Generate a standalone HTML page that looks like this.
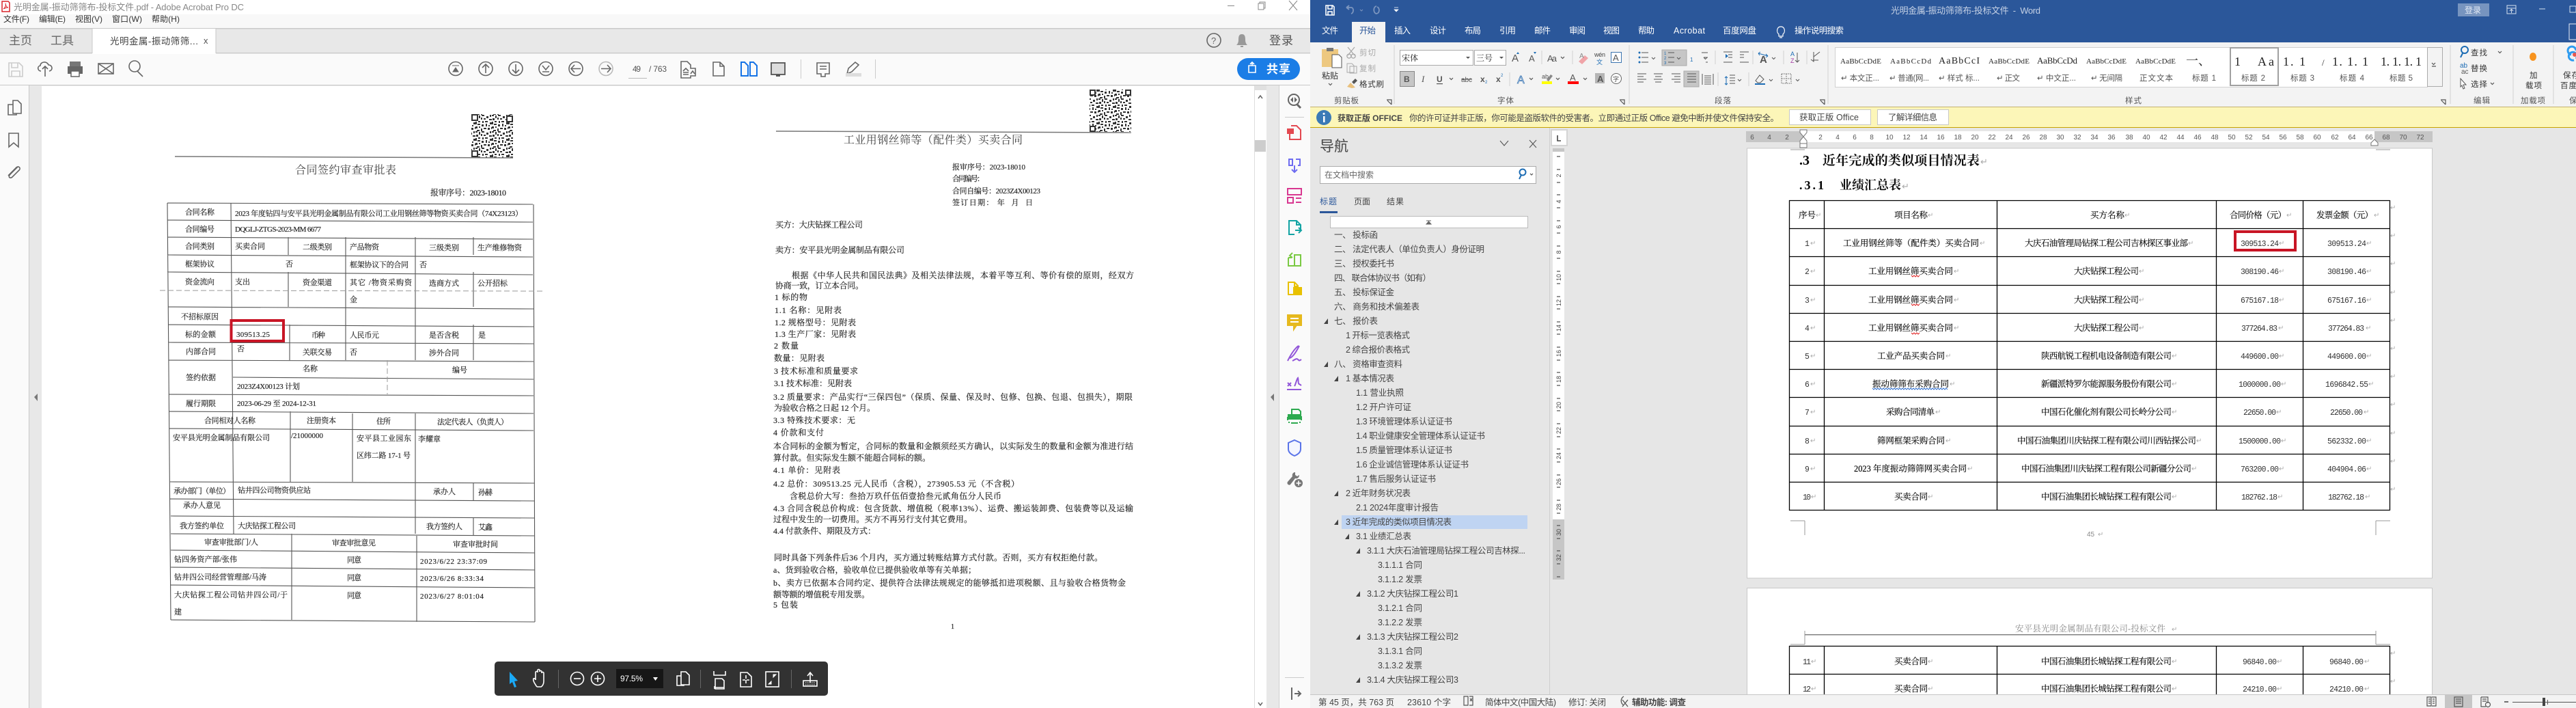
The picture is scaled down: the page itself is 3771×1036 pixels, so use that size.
<!DOCTYPE html>
<html lang="zh-CN"><head><meta charset="utf-8"><title>光明金属-振动筛筛布-投标文件</title>
<style>
html,body{margin:0;padding:0;width:3771px;height:1036px;overflow:hidden;background:#fff}
svg{display:block}
text{font-family:"Liberation Sans","Noto Sans CJK SC",sans-serif;font-size:12px;fill:#444;white-space:pre}
.ser{font-family:"Liberation Serif","Noto Serif CJK SC",serif}
.t11 text,.t11{font-family:"Liberation Serif","Noto Serif CJK SC",serif;font-size:11px;fill:#222;stroke:#333;stroke-width:.2}
.c12 text{font-family:"Liberation Serif","Noto Serif CJK SC",serif;font-size:12px;fill:#222;stroke:#333;stroke-width:.2}
.c16 text{font-family:"Liberation Serif","Noto Serif CJK SC",serif;font-size:16px;fill:#444}
.m text{font-size:12px;fill:#333}
.tab text{font-size:12.5px;fill:#fff}
.nav text{font-size:12.5px;fill:#444}
.lab text{font-size:11.5px;fill:#555}
.sty text{font-family:"Liberation Serif","Noto Serif CJK SC",serif;font-size:11px;fill:#222}
.rh text{font-size:10px;fill:#555;text-anchor:middle}
.rv text{font-size:9px;fill:#444;text-anchor:middle}
.dc text{font-family:"Liberation Serif","Noto Serif CJK SC",serif;font-size:12.5px;fill:#000;stroke:#111;stroke-width:.15}
.num text{font-family:"Liberation Mono","Noto Serif CJK SC",monospace;font-size:11.5px;fill:#333}
.r{font-size:10px;fill:#aaa;font-family:"DejaVu Sans",sans-serif}
.i{fill:none;stroke:#666;stroke-width:1.6}
.k{fill:none;stroke:#555;stroke-width:1.2}
.w{fill:none;stroke:#fff;stroke-width:1.6}
</style></head><body>
<svg width="3771" height="1036" viewBox="0 0 3771 1036" xmlns="http://www.w3.org/2000/svg">
<defs>
<pattern id="q" width="24" height="24" patternUnits="userSpaceOnUse"><path fill="#333" d="M0 0h3v2H0zM5 1h2v4H5zM9 0h4v2H9zM16 2h3v3h-3zM21 0h2v3h-2zM1 5h3v3H1zM8 4h2v3H8zM12 5h3v2h-3zM20 6h4v2h-4zM0 10h2v4H0zM4 9h3v2H4zM10 9h2v3h-2zM14 9h4v2h-4zM21 11h3v3h-3zM3 13h4v2H3zM9 14h3v3H9zM15 13h2v4h-2zM19 15h2v2h-2zM0 17h3v3H0zM5 17h2v2H5zM12 19h4v2h-4zM18 19h3v3h-3zM2 22h4v2H2zM8 20h2v4H8zM23 18h1v3h-1z"/></pattern>
</defs>

<!-- ===== ACROBAT ===== -->
<rect x="0" y="0" width="1918" height="1036" fill="#fff"/>
<rect x="0" y="21" width="1918" height="20" fill="#f8f8f8"/>
<rect x="0" y="41" width="1918" height="37" fill="#e8e8e8"/>
<rect x="0" y="41" width="1918" height="1.4" fill="#c8c8c8"/>
<rect x="0" y="77" width="1918" height="1.4" fill="#c8c8c8"/>
<rect x="135" y="42" width="181" height="37" fill="#fff"/>
<path d="M135 42v36M316 42v36" stroke="#c8c8c8" fill="none"/>
<rect x="0" y="79" width="1918" height="45" fill="#fafafa"/>
<rect x="0" y="124" width="1918" height="1.4" fill="#c8c8c8"/>
<!-- title -->
<path d="M3 2h9l2 2v13H3z" fill="#fff" stroke="#d8232a" stroke-width="1.5"/><path d="M5 13c3-2 4-6 3-8 0 3 2 6 4 6-3 0-5 1-7 2z" fill="none" stroke="#d8232a"/>
<text x="20" y="15" textLength="337" style="font-size:13px;fill:#888">光明金属-振动筛筛布-投标文件.pdf - Adobe Acrobat Pro DC</text>
<g class="m">
<text x="5" y="32" textLength="38">文件(F)</text>
<text x="57" y="32" textLength="39">编辑(E)</text>
<text x="110" y="32" textLength="40">视图(V)</text>
<text x="164" y="32" textLength="44">窗口(W)</text>
<text x="222" y="32" textLength="41">帮助(H)</text>
</g>
<text x="13" y="65" textLength="34" style="font-size:17px;fill:#666">主页</text>
<text x="74" y="65" textLength="34" style="font-size:17px;fill:#666">工具</text>
<text x="161" y="65" textLength="129" style="font-size:13.5px;fill:#444">光明金属-振动筛筛...</text>
<text x="298" y="64" style="font-size:13px;fill:#555">x</text>
<!-- window buttons -->
<path d="M1797 8.5h10M1842 5h8v9h-8zM1844 5V3h8v9h-2M1887 1l12 14M1899 1l-12 14" fill="none" stroke="#888"/>
<!-- right tab icons -->
<circle cx="1777" cy="59" r="10" class="i"/><text x="1773" y="64" style="font-size:13px;fill:#666">?</text>
<path d="M1818 50c4 0 5 3 5 8 0 4 1 6 3 8h-16c2-2 3-4 3-8 0-5 1-8 5-8z" fill="#999"/><rect x="1816" y="67" width="4" height="2" fill="#999"/>
<text x="1858" y="65" textLength="35" style="font-size:17px;fill:#555">登录</text>
<!-- acrobat toolbar left icons -->
<g>
<path d="M13 92h15l5 5v15H13zM17 92v7h9v-7M17 112v-8h12v8" fill="none" stroke="#ccc" stroke-width="1.6"/>
<path d="M60 104c-5 0-6-7-1-8 0-6 10-7 12-1 6 0 7 8 1 9M66 112V97M62 101l4-4 4 4" class="i"/>
<path d="M102 90h16v7h-16z" fill="#777"/><path d="M99 97h22v11h-5v-4h-12v4h-5z" fill="#666"/><rect x="104" y="104" width="12" height="8" fill="#fff" stroke="#666" stroke-width="1.5"/>
<rect x="144" y="93" width="22" height="15" class="i"/><path d="M144 93l22 15M166 93l-22 15" class="i"/>
<circle cx="197" cy="97" r="8" class="i"/><path d="M201 104l8 8" class="i" stroke-width="2"/>
</g>
<!-- nav circles -->
<g class="i">
<circle cx="667" cy="100.500" r="10"/><circle cx="711" cy="100.500" r="10"/><circle cx="755" cy="100.500" r="10"/><circle cx="799" cy="100.500" r="10"/><circle cx="843" cy="100.500" r="10"/>
<circle cx="887" cy="100.500" r="10" stroke="#bbb"/>
</g>
<path d="M662 96h10M667 99l-4 6h8z" fill="#666" stroke="#666"/>
<path d="M711 107V94M706 99l5-5 5 5M755 94v13M750 102l5 5 5-5M794 96l5 6 5-6M794 105h10M850 100.500h-14M841 95l-5 5.500 5 5.500" class="i"/>
<path d="M880 100.500h14M889 95l5 5.500-5 5.500" class="i" stroke="#bbb"/>
<text x="926" y="105" textLength="12" style="font-size:12px;fill:#555">49</text>
<rect x="920" y="114" width="27" height="1" fill="#bbb"/>
<text x="950" y="105" textLength="26" style="font-size:12px;fill:#555">/ 763</text>
<!-- view icons -->
<path d="M997 90h9l5 5v5h7v11h-7v3h-14zM1000 104l4-4 4 4M1011 108l3-4 3 4M1000 109h8M1000 106h8" class="i"/>
<path d="M1044 91h10l6 6v14h-16zM1054 91v6h6" class="i"/>
<path d="M1085 91h5l5 5v15h-10zM1098 91h5l5 5v15h-10z" fill="none" stroke="#1473e6" stroke-width="2"/>
<rect x="1129" y="92" width="20" height="17" fill="#ddd" stroke="#555" stroke-width="1.8"/><path d="M1136 109h6v3h-6z" fill="#555"/>
<rect x="1172" y="87" width="1" height="28" fill="#ccc"/><rect x="1281" y="87" width="1" height="28" fill="#ccc"/>
<path d="M1196 92h18v16h-6v4l-4 0-2 0 0-4h-6zM1200 97h10M1200 101h10" class="i"/>
<path d="M1240 108l2-8 10-9 5 4-10 10zM1240 111l3-4" class="i"/><rect x="1238" y="107" width="23" height="5" fill="#ddd"/>
<rect x="1811" y="85" width="92" height="32" rx="16" fill="#1b7de6"/>
<path d="M1833 96v-5M1830 94l3-3 3 3M1828 96h3M1835 96h3v10h-10V96z" class="w"/>
<text x="1854" y="107" textLength="35" style="font-size:17px;fill:#fff;font-weight:700">共享</text>
<!-- left panel -->
<rect x="0" y="125" width="42" height="911" fill="#fafafa"/>
<rect x="42" y="125" width="19" height="911" fill="#e8e8e8"/>
<rect x="42" y="125" width="1" height="911" fill="#c8c8c8"/>
<path d="M19 147h7l5 5v14H19zM19 153h-7v15h12v-2" class="i"/>
<path d="M13 195h14v20l-7-6-7 6z" class="i" stroke-width="2"/>
<path d="M26 244l-11 11c-4 4 0 7 3 4l10-10c3-3-1-7-4-4l-12 12" class="i" stroke-width="1.8"/>
<path d="M50 581l5-5v11z" fill="#777"/>
<!-- right scrollbar/panel -->
<rect x="1836" y="125" width="18" height="911" fill="#fff"/>
<rect x="1836" y="125" width="1" height="911" fill="#ddd"/>
<rect x="1837" y="125" width="17" height="7" fill="#e0e0e0"/>
<rect x="1837" y="205" width="16" height="17" fill="#cdcdcd"/>
<path d="M1842 144l3-4 3 4M1842 1028l3 4 3-4" fill="none" stroke="#666" stroke-width="1.5"/>
<rect x="1854" y="125" width="18" height="911" fill="#e8e8e8"/>
<path d="M1860 581l5-5v11z" fill="#777"/>
<rect x="1872" y="125" width="46" height="911" fill="#fafafa"/>
<rect x="1872" y="125" width="1" height="911" fill="#d0d0d0"/>
<rect x="1881" y="171" width="28" height="1" fill="#ccc"/><rect x="1881" y="991" width="28" height="1" fill="#ccc"/>
<g fill="none" stroke-width="2">
<circle cx="1894" cy="146" r="8" stroke="#666"/><path d="M1899 153l5 5" stroke="#666" stroke-width="3"/><path d="M1893 142v8l-4-4zM1895 142v8l4-4z" fill="#666" stroke="none"/>
<path d="M1890 184h8l6 6v14h-16v-9" stroke="#e34850"/><rect x="1885" y="189" width="8" height="6" fill="#e34850" stroke="#e34850"/>
<path d="M1887 233h5v9h-5zM1897 233h6v9h-3M1895 242v10M1891 248l4 4 4-4" stroke="#6e6cf0"/>
<rect x="1885" y="276" width="20" height="9" stroke="#d83790"/><rect x="1885" y="289" width="8" height="8" stroke="#d83790"/><path d="M1897 290h8M1897 296h8" stroke="#d83790"/>
<path d="M1904 336v-7l-6-6h-11v20h8M1898 323v6h6M1896 337h9M1901 333l4 4-4 4" stroke="#12a3a3"/>
<path d="M1895 373h9v16h-9zM1886 377h5M1886 377v12h8" stroke="#7ac943"/><path d="M1886 377v12h6" stroke="#7ac943" stroke-dasharray="2 2"/><path d="M1892 370l-4 4 4 3" stroke="#7ac943"/>
<path d="M1898 431h-12v-18h9l5 5v2h-5M1895 413v6h6" stroke="#e8c100"/><rect x="1894" y="421" width="11" height="10" fill="#e8c100" stroke="#e8c100"/>
<path d="M1885 461h20v15h-7l-4 6v-6h-9z" fill="#e6b91e" stroke="#e6b91e"/><path d="M1889 466h12M1889 471h12" stroke="#fff"/>
<path d="M1885 528c4-8 10-18 16-22M1888 524c6-2 12-14 14-18M1892 528c4-2 6-4 8-2s2 2 5 0" stroke="#9256d9"/>
<path d="M1885 560l5 5M1890 560l-5 5M1884 570h21M1895 565c2-3 3-10 5-12 1 3 0 9 2 9l3 2" stroke="#9256d9"/>
<path d="M1891 599h10l3 3v8h-13zM1885 610h20v5M1885 610v5M1890 619h10" stroke="#2da94f"/><rect x="1885" y="606" width="20" height="8" fill="#2da94f" stroke="none"/><path d="M1887 617v2M1892 619h2M1898 619h2M1903 617v2" stroke="#2da94f"/>
<path d="M1895 644l9 4v9c0 5-4 8-9 10-5-2-9-5-9-10v-9z" stroke="#5a74e8" fill="#f4f6ff"/>
<path d="M1896 691c-3 0-5 3-4 6l-7 8c-2 3 2 6 4 4l7-9c4 1 6-2 6-5l-3 2-3-2z" fill="#777" stroke="none"/><circle cx="1901" cy="707" r="6" fill="#777" stroke="none"/><path d="M1897.500 707h7M1901 703.500v7" stroke="#fff" stroke-width="1.600"/>
<path d="M1891 1006v18M1895 1015h8M1900 1011l4 4-4 4" stroke="#666"/>
</g>

<!-- Left scanned page -->
<rect x="690" y="167" width="62" height="64" fill="url(#q)"/>
<g fill="#fff" stroke="#333" stroke-width="2"><rect x="691" y="168" width="8" height="8"/><rect x="742" y="170" width="8" height="8"/><rect x="691" y="221" width="8" height="8"/></g>
<path d="M256 229l495 2" stroke="#777" stroke-width="1.500"/>
<path fill="none" stroke="#555" stroke-width="1.100" d="M245 297l535 2M245 322l535 3M245 347l535 3M245 373l535 3M245 398l535 4M246 449l535 3M246 475l535 3M246 501l535 2M247 527l534 2M341 552l440 3M247 577l534 2M248 602l533 3M248 627l533 3M249 705l533 2M249 730l533 3M250 755l532 3M250 781l532 3M250 805l533 4M250 830l533 4M250 856l533 4M250 907l533 3M245 297l5 610M781 299l2 611M338 297l4 484M422 347v26M422 398v51M424 475v52M506 347v180M608 347v180M693 347v26M693 398v51M693 475v52M425 602v103M516 605v100M608 605v176M693 707v26M693 758v26M427 781v126M610 784v126"/>
<path stroke="#999" fill="none" stroke-width="1" stroke-dasharray="8 4" d="M234 425l560 1M567 527v50"/>
<rect x="338.500" y="469" width="76.500" height="30" fill="none" stroke="#c81525" stroke-width="4"/>
<g class="c16"><text x="432" y="254" textLength="148">合同签约审查审批表</text></g>
<g class="c12"><text x="630" y="286" textLength="111">报审序号：2023-18010</text></g>
<g class="t11">
<text x="271" y="314" textLength="43">合同名称</text><text x="344" y="316" textLength="421">2023 年度钻四与安平县光明金属制品有限公司工业用钢丝筛等物资买卖合同（74X23123）</text>
<text x="271" y="339" textLength="43">合同编号</text><text x="344" y="339" textLength="126">DQGLJ-ZTGS-2023-MM 6677</text>
<text x="271" y="364" textLength="43">合同类别</text><text x="344" y="364" textLength="44">买卖合同</text><text x="443" y="365" textLength="43">二级类别</text><text x="512" y="365" textLength="43">产品物资</text><text x="628" y="366" textLength="44">三级类别</text><text x="699" y="366" textLength="65">生产维修物资</text>
<text x="271" y="390" textLength="43">框架协议</text><text x="418" y="390">否</text><text x="512" y="391" textLength="86">框架协议下的合同</text><text x="614" y="391">否</text>
<text x="271" y="416" textLength="43">资金流向</text><text x="344" y="416" textLength="22">支出</text><text x="443" y="417" textLength="43">资金渠道</text><text x="512" y="417" textLength="91">其它 /物资采购资</text><text x="628" y="418" textLength="44">选商方式</text><text x="699" y="418" textLength="44">公开招标</text>
<text x="512" y="442">金</text>
<text x="265" y="467" textLength="55">不招标原因</text>
<text x="271" y="493" textLength="45">标的金额</text><text x="346" y="493" textLength="49">309513.25</text><text x="456" y="494" textLength="20">币种</text><text x="512" y="494" textLength="43">人民币元</text><text x="628" y="494" textLength="44">是否含税</text><text x="700" y="494">是</text>
<text x="272" y="518" textLength="44">内部合同</text><text x="347" y="514">否</text><text x="443" y="519" textLength="43">关联交易</text><text x="512" y="519">否</text><text x="628" y="520" textLength="44">涉外合同</text>
<text x="272" y="556" textLength="44">签约依据</text><text x="443" y="543" textLength="22">名称</text><text x="662" y="545" textLength="22">编号</text><text x="347" y="569" textLength="92">2023Z4X00123 计划</text>
<text x="272" y="594" textLength="44">履行期限</text><text x="347" y="594" textLength="116">2023-06-29 至 2024-12-31</text>
<text x="299" y="619" textLength="75">合同相对人名称</text><text x="449" y="619" textLength="43">注册资本</text><text x="551" y="620" textLength="21">住所</text><text x="640" y="621" textLength="104">法定代表人（负责人）</text>
<text x="253" y="644" textLength="142">安平县光明金属制品有限公司</text><text x="426" y="641" textLength="47">/21000000</text><text x="522" y="645" textLength="80">安平县工业园东</text><text x="612" y="646" textLength="33">李耀章</text><text x="522" y="670" textLength="79">区纬二路 17-1 号</text>
<text x="254" y="722" textLength="83">承办部门（单位）</text><text x="348" y="721" textLength="107">钻井四公司物资供应站</text><text x="634" y="723" textLength="33">承办人</text><text x="700" y="724" textLength="21">孙赫</text>
<text x="268" y="743" textLength="55">承办人意见</text>
<text x="263" y="773" textLength="65">我方签约单位</text><text x="348" y="773" textLength="85">大庆钻探工程公司</text><text x="624" y="774" textLength="53">我方签约人</text><text x="700" y="775" textLength="21">艾鑫</text>
<text x="299" y="797" textLength="79">审查审批部门/人</text><text x="486" y="798" textLength="64">审查审批意见</text><text x="663" y="800" textLength="66">审查审批时间</text>
<text x="255" y="822" textLength="92">钻四务资产部/张伟</text><text x="508" y="823" textLength="21">同意</text><text x="615" y="825" textLength="98">2023/6/22 23:37:09</text>
<text x="255" y="848" textLength="135">钻井四公司经营管理部/马涛</text><text x="508" y="849" textLength="21">同意</text><text x="615" y="850" textLength="93">2023/6/26 8:33:34</text>
<text x="255" y="874" textLength="166">大庆钻探工程公司钻井四公司/于</text><text x="508" y="875" textLength="21">同意</text><text x="615" y="876" textLength="93">2023/6/27 8:01:04</text>
<text x="255" y="899">建</text>
</g>

<!-- Right scanned page -->
<rect x="1595" y="131" width="61" height="62" fill="url(#q)"/>
<g fill="#fff" stroke="#333" stroke-width="2"><rect x="1596" y="132" width="7" height="7"/><rect x="1648" y="132" width="7" height="7"/><rect x="1596" y="185" width="7" height="7"/></g>
<path d="M1136 192l520 2" stroke="#777" stroke-width="1.500"/>
<g class="c16"><text x="1235" y="210" textLength="262">工业用钢丝筛等（配件类）买卖合同</text></g>
<g class="t11">
<text x="1394" y="248" textLength="107">报审序号：2023-18010</text>
<text x="1394" y="265" textLength="47">合同编号：</text>
<text x="1394" y="283" textLength="129">合同自编号：2023Z4X00123</text>
<text x="1394" y="300" textLength="118">签订日期： 年  月  日</text>
</g>
<g class="c12">
<text x="1135" y="333" textLength="128">买方：大庆钻探工程公司</text>
<text x="1135" y="370" textLength="189">卖方：安平县光明金属制品有限公司</text>
<text x="1159" y="407" textLength="501">根据《中华人民共和国民法典》及相关法律法规，本着平等互利、等价有偿的原则，经双方</text>
<text x="1135" y="422" textLength="129">协商一致，订立本合同。</text>
<text x="1134" y="439" textLength="48">1 标的物</text>
<text x="1134" y="458" textLength="98">1.1 名称：见附表</text>
<text x="1134" y="476" textLength="119">1.2 规格型号：见附表</text>
<text x="1134" y="493" textLength="119">1.3 生产厂家：见附表</text>
<text x="1133" y="510" textLength="36">2 数量</text>
<text x="1133" y="528" textLength="74">数量：见附表</text>
<text x="1133" y="547" textLength="123">3 技术标准和质量要求</text>
<text x="1133" y="565" textLength="114">3.1 技术标准：见附表</text>
<text x="1132" y="585" textLength="526">3.2 质量要求：产品实行“三保四包”（保质、保量、保及时、包修、包换、包退、包损失），期限</text>
<text x="1133" y="601" textLength="148">为验收合格之日起 12 个月。</text>
<text x="1132" y="619" textLength="120">3.3 特殊技术要求：无</text>
<text x="1132" y="637" textLength="74">4 价款和支付</text>
<text x="1132" y="657" textLength="527">本合同标的金额为暂定，合同标的数量和金额须经买方确认，以实际发生的数量和金额为准进行结</text>
<text x="1132" y="674" textLength="230">算付款。但实际发生额不能超合同标的额。</text>
<text x="1132" y="692" textLength="98">4.1 单价：见附表</text>
<text x="1132" y="712" textLength="360">4.2 总价：309513.25 元人民币（含税），273905.53 元（不含税）</text>
<text x="1156" y="730" textLength="310">含税总价大写：叁拾万玖仟伍佰壹拾叁元贰角伍分人民币</text>
<text x="1132" y="748" textLength="527">4.3 合同含税总价构成：包含货款、增值税（税率13%）、运费、搬运装卸费、包装费等以及运输</text>
<text x="1132" y="764" textLength="291">过程中发生的一切费用。买方不再另行支付其它费用。</text>
<text x="1132" y="781" textLength="150">4.4 付款条件、期限及方式：</text>
<text x="1133" y="820" textLength="481">同时具备下列条件后36 个月内，买方通过转账结算方式付款。否则，买方有权拒绝付款。</text>
<text x="1132" y="838" textLength="297">a、货到验收合格，验收单位已提供验收单等有关单据；</text>
<text x="1132" y="857" textLength="516">b、卖方已依据本合同约定、提供符合法律法规规定的能够抵扣进项税额、且与验收合格货物金</text>
<text x="1132" y="874" textLength="141">额等额的增值税专用发票。</text>
<text x="1132" y="889" textLength="36">5 包装</text>
<text x="1392" y="920" style="font-size:10px">1</text>
</g>

<!-- Floating toolbar -->
<rect x="724" y="968" width="488" height="50" rx="5" fill="#323232"/>
<path d="M746 983l12 13-5 1 3 8-3 1-3-8-4 3z" fill="#1ba9f5"/>
<path d="M784 1002c-2-3-4-7-3-9 2-1 3 1 3 2v-11c0-2 3-2 3 0v-3c0-2 3-2 3 0v2c0-2 3-2 3 0v2c0-2 3-2 3 0v12c0 4-2 7-4 8h-5c-1 0-2-1-3-3z" class="w"/>
<rect x="817" y="980" width="1" height="27" fill="#666"/>
<circle cx="845" cy="993" r="9.500" class="w" stroke-width="2"/><path d="M840 993h10" class="w" stroke-width="2.500"/>
<circle cx="875" cy="993" r="9.500" class="w" stroke-width="2"/><path d="M870 993h10M875 988v10" class="w" stroke-width="2.500"/>
<rect x="902" y="979" width="69" height="28" fill="#161616"/>
<text x="908" y="997" textLength="33" style="font-size:12px;fill:#fff">97.5%</text>
<path d="M956 991h7l-3.500 5z" fill="#fff"/>
<path d="M997 983h7l5 5v14h-12zM997 989h-6v14h10v-1" class="w" stroke-width="1.800"/>
<rect x="1025" y="980" width="1" height="27" fill="#666"/>
<path d="M1045 982v6h17v-6M1047 993h10l3 3v12h-13zM1046 1006h14M1046 1004v4M1060 1004v4" class="w"/>
<path d="M1084 984h10l6 6v15h-16z" class="w" stroke-width="1.800"/><path d="M1092 988v5M1092 1000v-5M1087 995h4M1097 995h-4" class="w"/>
<rect x="1121" y="983" width="19" height="22" class="w" stroke-width="2"/><path d="M1125 1001l4-4v4h-4zM1136 987l-4 4v-4h4z" fill="#fff" stroke="#fff"/>
<rect x="1158" y="980" width="1" height="27" fill="#666"/>
<path d="M1186 999v-14M1182 989l4-5 4 5" class="w" stroke-width="2"/><rect x="1176" y="996" width="20" height="8" class="w" stroke-width="2"/><path d="M1179 999h14M1179 1002h14" stroke="#fff" stroke-dasharray="1.500 1.500"/>

<!-- ===== WORD ===== -->
<rect x="1918" y="0" width="1853" height="1036" fill="#e6e6e6"/>
<rect x="1918" y="0" width="1853" height="62" fill="#2b579a"/>
<rect x="1979" y="32" width="49" height="30" fill="#f3f3f3"/>
<rect x="1918" y="62" width="1853" height="95" fill="#f3f3f3"/>
<rect x="1918" y="156" width="1853" height="1.500" fill="#c4b270"/>
<path d="M1941 8h10l2 2v12h-12zM1944 8v5h6V8M1944 22v-5h6v5" fill="none" stroke="#fff" stroke-width="1.600"/>
<path d="M1971 11l4-3M1971 11l4 3M1971 11h7c4 0 4 8 0 9" fill="none" stroke="#7d96bf" stroke-width="1.800"/><path d="M2015 9c-5 1-5 10 0 11 5-1 5-8 1-10" fill="none" stroke="#7d96bf" stroke-width="1.800"/><path d="M1991 14l2 2 2-2" fill="none" stroke="#7d96bf"/><path d="M2041 11h6M2041 14h6l-3 3z" fill="#fff" stroke="#fff" stroke-width=".7"/>
<text x="2768" y="20" textLength="219" style="font-size:13px;fill:#c5d1e5">光明金属-振动筛筛布-投标文件  -  Word</text>
<rect x="3598" y="5" width="46" height="19" fill="#7794bf"/><text x="3608" y="19" textLength="24" style="fill:#e3eaf5">登录</text>
<path d="M3670 8h13v12h-13zM3670 12h13M3676.500 19v-5M3674 16l2.500-2.500 2.500 2.500M3717 13h9M3762 9h9v9h-9z" fill="none" stroke="#d6e0ef"/>
<rect x="3761" y="35" width="12" height="23" fill="none" stroke="#e8eef7"/>
<g class="tab">
<text x="1935" y="49" textLength="24">文件</text>
<text x="1990" y="49" textLength="24" style="fill:#2b579a">开始</text>
<text x="2041" y="49" textLength="24">插入</text><text x="2093" y="49" textLength="24">设计</text><text x="2144" y="49" textLength="24">布局</text><text x="2195" y="49" textLength="24">引用</text><text x="2246" y="49" textLength="24">邮件</text><text x="2297" y="49" textLength="24">审阅</text><text x="2347" y="49" textLength="24">视图</text><text x="2398" y="49" textLength="24">帮助</text>
<text x="2450" y="49" textLength="46">Acrobat</text><text x="2522" y="49" textLength="49">百度网盘</text><text x="2627" y="49" textLength="72">操作说明搜索</text>
</g>
<path d="M2607 39c-6 0-7 8-3 11v3h6v-3c4-3 3-11-3-11zM2605 55h4" fill="none" stroke="#fff" stroke-width="1.200"/>
<!-- ribbon separators -->
<path d="M2041 66v86M2385 66v86M2676 66v86M3587 66v86M3679 66v86M3738 66v86M2257 74v20M2302 74v20M2210 106v20M2511 74v20M2566 74v20M2611 74v20M2645 74v20M2515 106v20M2560 106v20" stroke="#d0d0d0" fill="none"/>
<!-- clipboard -->
<path d="M1935 72h24v26h-24z" fill="#edc880"/><rect x="1942" y="70" width="10" height="5" fill="#777"/><path d="M1950 80h10l4 4v15h-14z" fill="#fff" stroke="#555"/>
<g class="lab">
<text x="1935" y="115" textLength="24" style="fill:#333;font-size:12px">粘贴</text>
<text x="1990" y="81" textLength="24" style="fill:#aaa">剪切</text><text x="1990" y="104" textLength="24" style="fill:#aaa">复制</text><text x="1990" y="127" textLength="36" style="fill:#333">格式刷</text>
<text x="1953" y="151" textLength="36">剪贴板</text><text x="2192" y="151" textLength="24">字体</text><text x="2510" y="151" textLength="24">段落</text><text x="3111" y="151" textLength="24">样式</text><text x="3621" y="151" textLength="24">编辑</text><text x="3690" y="151" textLength="36">加载项</text><text x="3761" y="151">保</text>
<text x="3617" y="81" textLength="24" style="fill:#333">查找</text><text x="3617" y="104" textLength="24" style="fill:#333">替换</text><text x="3617" y="127" textLength="24" style="fill:#333">选择</text>
<text x="3703" y="114" style="fill:#333">加</text><text x="3697" y="129" textLength="24" style="fill:#333">载项</text>
<text x="3752" y="114" textLength="24" style="fill:#333">保存</text><text x="3748" y="129" textLength="24" style="fill:#333">百度</text>
</g>
<path d="M1945 122l2.500 2.500 2.500-2.500" class="k"/>
<path d="M1973 69l10 12M1983 69l-10 12M1977 80a3 3 0 1 1-5 3 3 3 0 0 1 5-3zM1979 80a3 3 0 1 0 5 3 3 3 0 0 0-5-3z" fill="none" stroke="#aaa" stroke-width="1.300"/>
<path d="M1972 93h7l3 3v10h-10zM1976 97h10v10h-10z" fill="#f3f3f3" stroke="#aaa"/>
<path d="M1972 127l5-6 7 7-5 1z" fill="#e9c07c"/><path d="M1979 120l5-5 3 3-5 5z" fill="#555"/>
<path d="M2030 146h7v7M2031 147l6 6" class="k"/><path d="M2371 146h7v7M2372 147l6 6" class="k"/><path d="M2664 146h7v7M2665 147l6 6" class="k"/><path d="M3573 146h7v7M3574 147l6 6" class="k"/>
<!-- font -->
<rect x="2049.500" y="73.500" width="107" height="22" fill="#fff" stroke="#aaa"/><rect x="2158.500" y="73.500" width="46" height="22" fill="#fff" stroke="#aaa"/>
<text x="2052" y="89" textLength="24" style="fill:#222;font-size:12px" class="ser">宋体</text><text x="2161" y="89" textLength="24" style="fill:#222" class="ser">三号</text>
<path d="M2146 83h6l-3 3zM2195 83h6l-3 3z" fill="#555"/>
<text x="2213" y="90" style="font-size:15px;fill:#555">A</text><text x="2238" y="90" style="font-size:13px;fill:#555">A</text><path d="M2220 79l2-3 2 3z" fill="#1c6cb4"/><path d="M2245 76l2 3 2-3z" fill="#1c6cb4"/>
<text x="2265" y="90" textLength="14" style="font-size:13px;fill:#555">Aa</text><path d="M2285 83l2.500 2.500 2.500-2.500M2340 83" class="k"/>
<path d="M2311 90l9-9 5 4-9 9z" fill="#f0a4a8"/><text x="2312" y="85" style="font-size:10px;fill:#888">A</text>
<text x="2334" y="83" textLength="16" style="font-size:9px;fill:#444">wén</text><text x="2337" y="94" style="font-size:9px;fill:#1c6cb4">文</text>
<rect x="2358.500" y="76.500" width="15" height="15" fill="#fff" stroke="#3b75b0"/><text x="2361" y="89" style="font-size:13px;fill:#555">A</text>
<rect x="2049.500" y="104.500" width="21" height="22" fill="#c6c6c6" stroke="#888"/>
<text x="2055" y="120" style="font-size:12px;font-weight:700;fill:#555">B</text>
<text x="2081" y="120" class="ser" style="font-style:italic;font-size:13px;fill:#555">I</text>
<text x="2103" y="120" style="font-size:12px;font-weight:700;fill:#555">U</text><rect x="2103" y="122" width="9" height="1.200" fill="#555"/><path d="M2122 114l2.500 2.500 2.500-2.500" class="k"/>
<text x="2139" y="120" textLength="16" style="font-size:10px;fill:#555">abc</text><path d="M2139 116h16" stroke="#555"/>
<text x="2167" y="120" style="font-size:12px;font-weight:700;fill:#555">x</text><text x="2174" y="122" style="font-size:6px;fill:#1c6cb4">2</text>
<text x="2190" y="120" style="font-size:12px;font-weight:700;fill:#555">x</text><text x="2197" y="112" style="font-size:6px;fill:#1c6cb4">2</text>
<text x="2221" y="122" style="font-size:16px;fill:#cfe0f5;stroke:#3b75b0;stroke-width:.7">A</text><path d="M2239 114l2.500 2.500 2.500-2.500M2278 114l2.500 2.500 2.500-2.500M2318 114l2.500 2.500 2.500-2.500" class="k"/>
<text x="2257" y="115" style="font-size:9px;fill:#555">ab</text><path d="M2264 117l6-8 3 2-6 8z" fill="#888"/><rect x="2257" y="119" width="15" height="4" fill="#ffff00"/>
<text x="2298" y="118" style="font-size:13px;fill:#555">A</text><rect x="2295" y="119" width="16" height="4" fill="#f00"/>
<rect x="2335" y="107" width="14" height="15" fill="#b5b5b5"/><text x="2338" y="120" style="font-size:13px;font-weight:700;fill:#555">A</text>
<circle cx="2366" cy="115" r="7.500" fill="#fff" stroke="#666"/><text x="2361" y="119" style="font-size:9px;fill:#555">字</text>
<!-- paragraph -->
<rect x="2433" y="73" width="36" height="23" fill="#c6c6c6" stroke="#aaa"/>
<rect x="2465" y="104" width="22" height="23" fill="#c6c6c6" stroke="#aaa"/>
<g fill="none" stroke="#555">
<path d="M2403 77h10M2403 84h10M2403 91h10M2442 77h9M2442 84h9M2442 91h9M2491 77h9M2494 84h6M2497 91h3M2523 76h13M2530 80h6M2530 84h6M2523 91h13M2547 76h13M2547 80h6M2547 84h6M2547 91h13"/>
<path d="M2397 108h13M2397 112h9M2397 116h13M2397 120h9M2421 108h13M2423 112h9M2421 116h13M2423 120h9M2447 108h13M2451 112h9M2447 116h13M2451 120h9M2470 108h13M2470 112h13M2470 116h13M2470 120h13M2492 108v16M2508 108v16M2495 111h10M2495 114h10M2495 117h10M2495 120h10M2495 123h10M2532 110h8M2532 114h8M2532 118h8M2532 122h8"/>
<path d="M2418 84l2.500 2.500 2.500-2.500M2455 84l2.500 2.500 2.500-2.500M2494 84l2.500 2.500 2.500-2.500M2594 84l2.500 2.500 2.500-2.500M2544 116l2.500 2.500 2.500-2.500M2590 116l2.500 2.500 2.500-2.500M2629 116l2.500 2.500 2.500-2.500"/>
<path d="M2530 82l-4-3v6zM2551 82" fill="#1c6cb4" stroke="none"/>
<path d="M2527 112v12M2525 114l2-2 2 2M2525 122l2 2 2-2" stroke="#1c6cb4"/>
<path d="M2570 118l6-8 6 6-5 5h-4zM2569 123h15" stroke="#555"/><path d="M2569 123h15" stroke="#1c6cb4" stroke-width="2"/>
<rect x="2608" y="108" width="14" height="14" stroke-dasharray="1.500 1.500"/><path d="M2608 115h14M2615 108v14" stroke-dasharray="1.500 1.500"/>
<path d="M2655 76v14l-4-3M2664 76l-9 7M2654 88h8" stroke="#555"/>
</g>
<g fill="#1c6cb4"><circle cx="2400" cy="77" r="1.500"/><circle cx="2400" cy="84" r="1.500"/><circle cx="2400" cy="91" r="1.500"/></g>
<text x="2436" y="80" style="font-size:6px;fill:#1c6cb4">1</text><text x="2436" y="87" style="font-size:6px;fill:#1c6cb4">2</text><text x="2436" y="94" style="font-size:6px;fill:#1c6cb4">3</text>
<text x="2474" y="90" style="font-size:8px;fill:#1c6cb4">1</text>
<text x="2576" y="92" style="font-size:15px;font-weight:700;fill:#555">A</text><path d="M2574 78l14 4M2574 78l3-2M2574 78l2 3M2588 82l-3-3M2588 82l-3 2" stroke="#1c6cb4" fill="none"/>
<text x="2621" y="82" style="font-size:9px;fill:#1c6cb4">A</text><text x="2621" y="92" style="font-size:9px;fill:#a33aa3">Z</text><path d="M2631 77v14M2628 88l3 3 3-3" stroke="#555" fill="none"/>
<!-- styles -->
<rect x="2686.500" y="69.500" width="867" height="58" fill="#fff" stroke="#d0d0d0"/>
<rect x="3553.500" y="69.500" width="22" height="57" fill="#f3f3f3" stroke="#aaa"/>
<path d="M3560 92l2.500 2.500 2.500-2.500M3560 97h6" class="k"/>
<rect x="3265" y="70" width="70" height="55" fill="#fff" stroke="#a0a0a0" stroke-width="2"/>
<g class="sty">
<text x="2694" y="93" textLength="60">AaBbCcDdE</text><text x="2767" y="93" textLength="60">AaBbCcDd</text>
<text x="2838" y="93" textLength="60" style="font-size:14px">AaBbCcI</text><text x="2911" y="93" textLength="60">AaBbCcDdE</text>
<text x="2982" y="93" textLength="59" style="font-size:13px">AaBbCcDd</text><text x="3054" y="93" textLength="59">AaBbCcDdE</text><text x="3126" y="93" textLength="59">AaBbCcDdE</text>
<text x="3200" y="95" style="font-size:18px">一、</text>
<text x="3271" y="96" style="font-size:18px">1</text><text x="3305" y="96" textLength="24" style="font-size:18px">Aa</text>
<text x="3342" y="96" textLength="33" style="font-size:18px">1. 1</text><text x="3399" y="96" style="font-size:13px">/</text>
<text x="3414" y="96" textLength="53" style="font-size:18px">1. 1. 1</text><text x="3485" y="96" textLength="60" style="font-size:18px">1. 1. 1. 1</text>
</g>
<g class="lab">
<text x="2695" y="118" textLength="56">↵ 本文正...</text><text x="2766" y="118" textLength="58">↵ 普通(网...</text><text x="2838" y="118" textLength="60">↵ 样式 标...</text><text x="2923" y="118" textLength="34">↵ 正文</text><text x="2982" y="118" textLength="57">↵ 中文正...</text><text x="3061" y="118" textLength="46">↵ 无间隔</text><text x="3132" y="118" textLength="49">正文文本</text><text x="3209" y="118" textLength="35">标题 1</text><text x="3281" y="118" textLength="35">标题 2</text><text x="3353" y="118" textLength="35">标题 3</text><text x="3425" y="118" textLength="36">标题 4</text><text x="3498" y="118" textLength="34">标题 5</text>
</g>
<!-- editing -->
<circle cx="3608" cy="73" r="5" fill="none" stroke="#1c6cb4" stroke-width="2"/><path d="M3605 78l-3 6" stroke="#1c6cb4" stroke-width="2"/><path d="M3657 75l2.500 2.500 2.500-2.500M3646 121l2.500 2.500 2.500-2.500" class="k"/>
<text x="3601" y="99" style="font-size:10px;fill:#1c6cb4">ab</text><text x="3603" y="108" style="font-size:10px;fill:#555">ac</text>
<path d="M3602 115l8 9-4 0 2 5-2 1-2-5-2 2z" fill="#fff" stroke="#555"/>
<ellipse cx="3708" cy="83" rx="5" ry="6" fill="#f7931e"/>
<path d="M3764 80a6 6 0 1 1 7-6M3768 88a6 6 0 1 1 3-2" fill="none" stroke="#2e9cf0" stroke-width="3"/><circle cx="3769" cy="80" r="3" fill="#e8584f"/>
<!-- message bar -->
<rect x="1918" y="157" width="1853" height="29" fill="#fcf6b8"/>
<rect x="1918" y="186" width="1853" height="1" fill="#c6a200"/>
<circle cx="1938" cy="172" r="11" fill="#3b7ab6"/><rect x="1937" y="170" width="2.500" height="9" fill="#fff"/><circle cx="1938" cy="166.500" r="1.500" fill="#fff"/>
<text x="1958" y="177" textLength="95" style="font-weight:700;fill:#444;font-size:12px">获取正版 OFFICE</text>
<text x="2063" y="177" textLength="541" style="fill:#444;font-size:12.5px">你的许可证并非正版，你可能是盗版软件的受害者。立即通过正版 Office 避免中断并使文件保持安全。</text>
<rect x="2619.500" y="160.500" width="119" height="22" fill="#fff" stroke="#c8c8c8"/><text x="2634" y="176" textLength="87" style="font-size:12.5px">获取正版 Office</text>
<rect x="2748.500" y="160.500" width="104" height="22" fill="#fff" stroke="#c8c8c8"/><text x="2764" y="176" textLength="72" style="font-size:12.5px">了解详细信息</text>
<!-- nav pane -->
<rect x="2268" y="187" width="1" height="830" fill="#cfcfcf"/>
<text x="1932" y="221" textLength="42" style="font-size:21px;fill:#444">导航</text>
<path d="M2196 206l6 7 6-7M2239 205l10 11M2249 205l-10 11" fill="none" stroke="#555" stroke-width="1.100"/>
<rect x="1932.500" y="243.500" width="316" height="25" fill="#fff" stroke="#ababab"/>
<text x="1939" y="260" textLength="72" style="fill:#666">在文档中搜索</text>
<circle cx="2229" cy="252" r="4.500" fill="none" stroke="#1c6cb4" stroke-width="2"/><path d="M2227 256l-3 6" stroke="#1c6cb4" stroke-width="2"/><path d="M2240 254l2 2 2-2" class="k"/>
<text x="1932" y="299" textLength="25" style="fill:#2b579a">标题</text><text x="1982" y="299" textLength="24">页面</text><text x="2030" y="299" textLength="25">结果</text>
<rect x="1932" y="309" width="26" height="3" fill="#2b579a"/>
<rect x="1947.500" y="316.500" width="289" height="17" fill="#fff" stroke="#bbb"/>
<path d="M2088 323h7M2091.500 324l-3.500 4h7z" fill="#666" stroke="#666"/>
<rect x="1964" y="754" width="272" height="20" fill="#bfd4f2"/>
<g class="nav">
<text x="1953" y="348" textLength="64">一、 投标函</text>
<text x="1953" y="369" textLength="220">二、 法定代表人（单位负责人）身份证明</text>
<text x="1953" y="390" textLength="88">三、 授权委托书</text>
<text x="1953" y="411" textLength="142">四、 联合体协议书（如有）</text>
<text x="1953" y="432" textLength="88">五、 投标保证金</text>
<text x="1953" y="453" textLength="125">六、 商务和技术偏差表</text>
<text x="1953" y="474" textLength="64">七、 报价表</text>
<text x="1970" y="495" textLength="94">1 开标一览表格式</text>
<text x="1970" y="516" textLength="94">2 综合报价表格式</text>
<text x="1953" y="537" textLength="100">八、 资格审查资料</text>
<text x="1970" y="558" textLength="71">1 基本情况表</text>
<text x="1985" y="579" textLength="70">1.1 营业执照</text>
<text x="1985" y="600" textLength="81">1.2 开户许可证</text>
<text x="1985" y="621" textLength="141">1.3 环境管理体系认证证书</text>
<text x="1985" y="642" textLength="189">1.4 职业健康安全管理体系认证证书</text>
<text x="1985" y="663" textLength="141">1.5 质量管理体系认证证书</text>
<text x="1985" y="684" textLength="165">1.6 企业诚信管理体系认证证书</text>
<text x="1985" y="705" textLength="117">1.7 售后服务认证证书</text>
<text x="1970" y="726" textLength="95">2 近年财务状况表</text>
<text x="1985" y="747" textLength="121">2.1 2024年度审计报告</text>
<text x="1970" y="768" textLength="155">3 近年完成的类似项目情况表</text>
<text x="1985" y="789" textLength="81">3.1 业绩汇总表</text>
<text x="2001" y="810" textLength="232">3.1.1 大庆石油管理局钻探工程公司吉林探...</text>
<text x="2017" y="831" textLength="65">3.1.1.1 合同</text>
<text x="2017" y="852" textLength="65">3.1.1.2 发票</text>
<text x="2001" y="873" textLength="134">3.1.2 大庆钻探工程公司1</text>
<text x="2017" y="894" textLength="65">3.1.2.1 合同</text>
<text x="2017" y="915" textLength="65">3.1.2.2 发票</text>
<text x="2001" y="936" textLength="134">3.1.3 大庆钻探工程公司2</text>
<text x="2017" y="957" textLength="65">3.1.3.1 合同</text>
<text x="2017" y="978" textLength="65">3.1.3.2 发票</text>
<text x="2001" y="999" textLength="134">3.1.4 大庆钻探工程公司3</text>
</g>
<path fill="#444" d="M1944 466v8h-6zM1944 529v8h-6zM1959 550v8h-6zM1959 718v8h-6zM1959 760v8h-6zM1975 781v8h-6zM1991 802v8h-6zM1991 865v8h-6zM1991 928v8h-6zM1991 991v8h-6z"/>

<!-- L box + v ruler -->
<rect x="2271" y="190" width="23" height="23" fill="#fff" stroke="#d4d4d4" stroke-width="2"/>
<path d="M2280 198v8h5" fill="none" stroke="#444" stroke-width="1.600"/>
<rect x="2273" y="217" width="17" height="5" fill="#c6c6c6"/>
<rect x="2273" y="222" width="17" height="538" fill="#fff"/>
<rect x="2273" y="760" width="17" height="88" fill="#c6c6c6"/>
<path stroke="#555" stroke-width="1.300" fill="none" d="M2279 229h5M2279 248h5M2279 267h5M2279 285h5M2279 304h5M2279 323h5M2279 341h5M2279 360h5M2279 378h5M2279 397h5M2279 415h5M2279 434h5M2279 452h5M2279 471h5M2279 489h5M2279 508h5M2279 527h5M2279 545h5M2279 564h5M2279 583h5M2279 601h5M2279 620h5M2279 639h5M2279 657h5M2279 676h5M2279 695h5M2279 713h5M2279 732h5M2279 751h5M2279 769h5M2279 788h5M2279 806h5M2279 825h5M2279 844h5"/>
<g class="rv">
<text transform="translate(2285,257) rotate(-90)">2</text><text transform="translate(2285,295) rotate(-90)">4</text><text transform="translate(2285,332) rotate(-90)">6</text><text transform="translate(2285,369) rotate(-90)">8</text><text transform="translate(2285,406) rotate(-90)">10</text><text transform="translate(2285,443) rotate(-90)">12</text><text transform="translate(2285,480) rotate(-90)">14</text><text transform="translate(2285,517) rotate(-90)">16</text><text transform="translate(2285,555) rotate(-90)">18</text><text transform="translate(2285,593) rotate(-90)">20</text><text transform="translate(2285,630) rotate(-90)">22</text><text transform="translate(2285,667) rotate(-90)">24</text><text transform="translate(2285,705) rotate(-90)">26</text><text transform="translate(2285,742) rotate(-90)">28</text><text transform="translate(2285,779) rotate(-90)">30</text><text transform="translate(2285,816) rotate(-90)">32</text>
</g>

<!-- h ruler -->
<rect x="2556" y="192" width="1005" height="16" fill="#fff"/>
<rect x="2556" y="192" width="84" height="16" fill="#c6c6c6"/>
<rect x="3476" y="192" width="85" height="16" fill="#c6c6c6"/>
<g class="rh">
<text x="2565" y="204">6</text><text x="2590" y="204">4</text><text x="2616" y="204">2</text>
<text x="2665" y="204">2</text><text x="2690" y="204">4</text><text x="2715" y="204">6</text><text x="2740" y="204">8</text><text x="2766" y="204">10</text><text x="2791" y="204">12</text><text x="2816" y="204">14</text><text x="2841" y="204">16</text><text x="2866" y="204">18</text><text x="2891" y="204">20</text><text x="2916" y="204">22</text><text x="2941" y="204">24</text><text x="2966" y="204">26</text><text x="2991" y="204">28</text><text x="3016" y="204">30</text><text x="3041" y="204">32</text><text x="3066" y="204">34</text><text x="3091" y="204">36</text><text x="3117" y="204">38</text><text x="3142" y="204">40</text><text x="3167" y="204">42</text><text x="3192" y="204">44</text><text x="3217" y="204">46</text><text x="3242" y="204">48</text><text x="3267" y="204">50</text><text x="3292" y="204">52</text><text x="3317" y="204">54</text><text x="3342" y="204">56</text><text x="3367" y="204">58</text><text x="3392" y="204">60</text><text x="3418" y="204">62</text><text x="3443" y="204">64</text><text x="3468" y="204">66</text><text x="3493" y="204">68</text><text x="3518" y="204">70</text><text x="3543" y="204">72</text>
</g>
<path d="M2635 190h10v4l-5 6-5-6zM2640 200l5 6v4h-10v-4zM2635 210h10v6h-10z" fill="#fff" stroke="#777"/>
<path d="M3476 204l5 5v4h-10v-4z" fill="#fff" stroke="#777"/>

<!-- pages -->
<rect x="2557.500" y="217" width="1003" height="629" fill="#fff" stroke="#c8c8c8"/>
<rect x="2557.500" y="860.500" width="1003" height="170" fill="#fff" stroke="#c8c8c8"/>
<path fill="none" stroke="#999" d="M2621 219h21M3478 219h21M2621 762h21M2642 762v21M3478 762v21M3478 762h21M2621 943h21M2642 923v20M3478 923v20M3478 943h21"/>
<rect x="2642" y="928" width="836" height="1.500" fill="#808080"/>
<text x="2950" y="924" textLength="220" style="font-size:12.5px;fill:#888" class="ser">安平县光明金属制品有限公司-投标文件</text>
<text x="3055" y="785" style="font-size:10px;fill:#888">45</text>
<!-- headings -->
<text x="2634" y="241" style="font-size:20px;font-weight:700;fill:#000" class="ser">.3</text>
<text x="2668" y="241" textLength="230" style="font-size:19px;font-weight:700;fill:#111" class="ser">近年完成的类似项目情况表</text>
<text x="2634" y="277" textLength="36" style="font-size:18px;font-weight:700;fill:#000" class="ser">.3.1</text>
<text x="2693" y="277" textLength="90" style="font-size:18px;font-weight:700;fill:#111" class="ser">业绩汇总表</text>
<text class="r" x="2899 2784" y="241 277" style="font-size:13px">↵↵</text>
<!-- table -->
<path stroke="#000" stroke-width="1.300" fill="none" d="M2619 293.500h879M2619 334.500h879M2619 375.500h879M2619 417.500h879M2619 458.500h879M2619 499.500h879M2619 540.500h879M2619 581.500h879M2619 623.500h879M2619 664.500h879M2619 705.500h879M2619 746.500h879M2619.500 293v454M2670.500 293v454M2923.500 293v454M3244.500 293v454M3371.500 293v454M3498.500 293v454M2619 945.500h879M2619 986.500h879M2619.500 945v75M2670.500 945v75M2923.500 945v75M3244.500 945v75M3371.500 945v75M3498.500 945v75"/>
<rect x="3272" y="339" width="88" height="27" fill="none" stroke="#c81525" stroke-width="4"/>
<g class="dc">
<text x="2633" y="319" textLength="25">序号</text><text x="2773" y="319" textLength="49">项目名称</text><text x="3060" y="319" textLength="50">买方名称</text><text x="3264" y="319" textLength="83">合同价格（元）</text><text x="3391" y="319" textLength="83">发票金额（元）</text>
<text x="2698" y="360" textLength="199">工业用钢丝筛等（配件类）买卖合同</text><text x="2964" y="360" textLength="239">大庆石油管理局钻探工程公司吉林探区事业部</text>
<text x="2735" y="401" textLength="124">工业用钢丝筛买卖合同</text><text x="3036" y="401" textLength="95">大庆钻探工程公司</text>
<text x="2735" y="443" textLength="124">工业用钢丝筛买卖合同</text><text x="3036" y="443" textLength="95">大庆钻探工程公司</text>
<text x="2735" y="484" textLength="124">工业用钢丝筛买卖合同</text><text x="3036" y="484" textLength="95">大庆钻探工程公司</text>
<text x="2748" y="525" textLength="99">工业产品买卖合同</text><text x="2988" y="525" textLength="191">陕西航锐工程机电设备制造有限公司</text>
<text x="2741" y="566" textLength="112">振动筛筛布采购合同</text><text x="2988" y="566" textLength="191">新疆派特罗尔能源服务股份有限公司</text>
<text x="2761" y="607" textLength="71">采购合同清单</text><text x="2988" y="607" textLength="191">中国石化催化剂有限公司长岭分公司</text>
<text x="2748" y="649" textLength="99">筛网框架采购合同</text><text x="2953" y="649" textLength="262">中国石油集团川庆钻探工程有限公司川西钻探公司</text>
<text x="2714" y="690" textLength="165">2023 年度振动筛筛网买卖合同</text><text x="2959" y="690" textLength="249">中国石油集团川庆钻探工程有限公司新疆分公司</text>
<text x="2773" y="731" textLength="49">买卖合同</text><text x="2988" y="731" textLength="191">中国石油集团长城钻探工程有限公司</text>
<text x="2773" y="972" textLength="49">买卖合同</text><text x="2988" y="972" textLength="191">中国石油集团长城钻探工程有限公司</text>
<text x="2773" y="1012" textLength="49">买卖合同</text><text x="2988" y="1012" textLength="191">中国石油集团长城钻探工程有限公司</text>
</g>
<g class="num">
<text x="2642" y="360">1</text><text x="2642" y="401">2</text><text x="2642" y="443">3</text><text x="2642" y="484">4</text><text x="2642" y="525">5</text><text x="2642" y="566">6</text><text x="2642" y="607">7</text><text x="2642" y="649">8</text><text x="2642" y="690">9</text><text x="2639" y="731" textLength="12">10</text><text x="2639" y="972" textLength="12">11</text><text x="2639" y="1012" textLength="12">12</text>
<text x="3280" y="360" textLength="56">309513.24</text><text x="3407" y="360" textLength="57">309513.24</text>
<text x="3280" y="401" textLength="56">308190.46</text><text x="3407" y="401" textLength="57">308190.46</text>
<text x="3280" y="443" textLength="56">675167.18</text><text x="3407" y="443" textLength="57">675167.16</text>
<text x="3281" y="484" textLength="53">377264.83</text><text x="3408" y="484" textLength="53">377264.83</text>
<text x="3280" y="525" textLength="56">449600.00</text><text x="3407" y="525" textLength="57">449600.00</text>
<text x="3277" y="566" textLength="62">1000000.00</text><text x="3404" y="566" textLength="63">1696842.55</text>
<text x="3284" y="607" textLength="48">22650.00</text><text x="3411" y="607" textLength="48">22650.00</text>
<text x="3277" y="649" textLength="62">1500000.00</text><text x="3407" y="649" textLength="57">562332.00</text>
<text x="3280" y="690" textLength="56">763200.00</text><text x="3407" y="690" textLength="57">404904.06</text>
<text x="3281" y="731" textLength="53">182762.18</text><text x="3408" y="731" textLength="53">182762.18</text>
<text x="3283" y="972" textLength="50">96840.00</text><text x="3410" y="972" textLength="50">96840.00</text>
<text x="3283" y="1012" textLength="50">24210.00</text><text x="3410" y="1012" textLength="50">24210.00</text>
</g>
<text class="r" x="2658 2822 3110 3347 3475 2650 2898 3203 3336 3464 2650 2860 3131 3336 3464 2650 2860 3131 3336 3464 2650 2860 3131 3335 3463 2650 2848 3179 3336 3464 2650 2854 3179 3339 3467 2650 2833 3179 3332 3460 2650 2848 3215 3339 3464 2650 2880 3208 3336 3464 2651 2822 3179 3334 3462 2651 2822 3179 3333 3461 2651 2822 3179 3333 3461" y="318 318 318 318 318 359 359 359 359 359 400 400 400 400 400 442 442 442 442 442 483 483 483 483 483 524 524 524 524 524 565 565 565 565 565 606 606 606 606 606 648 648 648 648 648 689 689 689 689 689 730 730 730 730 730 971 971 971 971 971 1011 1011 1011 1011 1011">↵↵↵↵↵↵↵↵↵↵↵↵↵↵↵↵↵↵↵↵↵↵↵↵↵↵↵↵↵↵↵↵↵↵↵↵↵↵↵↵↵↵↵↵↵↵↵↵↵↵↵↵↵↵↵↵↵↵↵↵↵↵↵↵↵</text>
<text class="r" x="3499 3499 3499 3499 3499 3499 3499 3499 3499 3499 3499 3499 3499 3071 3179" y="307 348 389 431 472 513 554 595 637 678 719 959 1000 785 924">↵↵↵↵↵↵↵↵↵↵↵↵↵↵↵</text>
<path fill="none" stroke="#e02020" d="M2798 403l2 2 2-2 2 2 2-2 2 2 2-2M2798 445l2 2 2-2 2 2 2-2 2 2 2-2M2798 487l2 2 2-2 2 2 2-2 2 2 2-2"/>
<path fill="none" stroke="#2f6fd0" d="M2741 568l2 2 2-2 2 2 2-2 2 2 2-2 2 2 2-2 2 2 2-2 2 2 2-2 2 2 2-2 2 2 2-2 2 2 2-2 2 2 2-2 2 2 2-2 2 2 2-2 2 2 2-2 2 2 2-2 2 2 2-2 2 2 2-2 2 2 2-2 2 2 2-2 2 2 2-2 2 2 2-2 2 2 2-2 2 2 2-2 2 2 2-2 2 2 2-2 2 2 2-2 2 2 2-2 2 2 2-2 2 2"/>

<!-- status -->
<rect x="1918" y="1016" width="1853" height="20" fill="#f3f3f3"/>
<rect x="1918" y="1016" width="1853" height="1" fill="#c6c6c6"/>
<text x="1930" y="1032" textLength="111" style="font-size:12.5px">第 45 页，共 763 页</text>
<text x="2060" y="1032" textLength="64" style="font-size:12.5px">23610 个字</text>
<path d="M2143 1019h6v13h-6zM2151 1019h5v13h-5M2152 1022l3 4M2155 1022l-3 4" class="k"/>
<text x="2174" y="1032" textLength="104" style="font-size:12.5px">简体中文(中国大陆)</text>
<text x="2296" y="1032" textLength="55" style="font-size:12.5px">修订: 关闭</text>
<path d="M2377 1019c-5 3-5 10 0 13M2375 1024l8 10M2383 1024l-8 10" fill="none" stroke="#555" stroke-width="1.300"/>
<text x="2389" y="1032" textLength="79" style="font-size:12.5px;font-weight:700">辅助功能: 调查</text>
<rect x="3579" y="1017" width="40" height="19" fill="#c6c6c6"/>
<path d="M3553 1020h6v13h-6zM3560 1020h6v13h-6M3555 1023h3M3555 1026h3M3555 1029h3M3561 1023h3M3561 1026h3M3561 1029h3M3593 1020h12v14h-12zM3595 1023h8M3595 1026h8M3595 1029h8M3632 1020h10v8h-2M3632 1020v14h7M3634 1023h6M3634 1026h6" class="k"/><circle cx="3642" cy="1031" r="3.500" class="k"/>
<path d="M3666 1027h6" stroke="#444" stroke-width="1.500"/>
<rect x="3678" y="1027" width="93" height="1" fill="#555"/><rect x="3722" y="1021" width="4" height="12" fill="#444"/><rect x="3729" y="1024" width="1" height="7" fill="#555"/>
</svg>
</body></html>
